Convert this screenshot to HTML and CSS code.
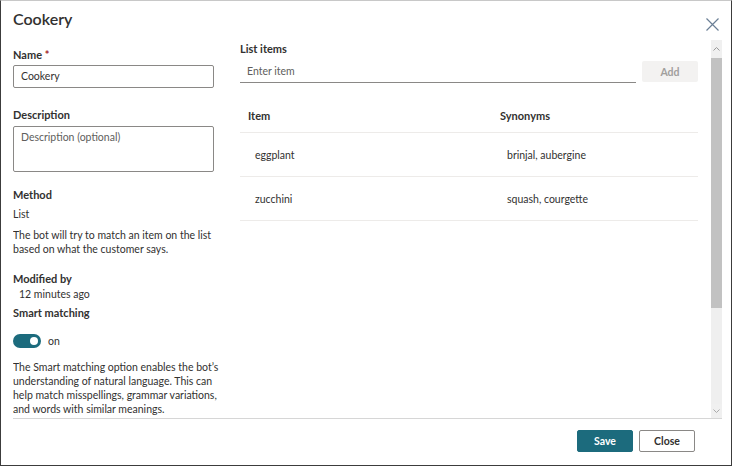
FILE: index.html
```html
<!DOCTYPE html>
<html>
<head>
<meta charset="utf-8">
<link rel="stylesheet" href="styles.css">
</head>
<body>
<div class="dialog">
  <div class="header">
    <h1 class="title">Cookery</h1>
    <button class="close-x" aria-label="Close">
      <svg width="13" height="13" viewBox="0 0 13 13"><path d="M0.5 0.5 L12.5 12.5 M12.5 0.5 L0.5 12.5" stroke="#6b7f96" stroke-width="1.2" fill="none"/></svg>
    </button>
  </div>
  <div class="scroll">
    <div class="content">
      <div class="left">
        <label class="label first">Name <span class="req">*</span></label>
        <div class="input">Cookery</div>
        <label class="label desc-label">Description</label>
        <div class="textarea">Description (optional)</div>
        <div class="label method">Method</div>
        <div class="text list">List</div>
        <p class="text para1">The bot will try to match an item on the list based on what the customer says.</p>
        <div class="label modified">Modified by</div>
        <div class="text ago">12 minutes ago</div>
        <div class="label smart">Smart matching</div>
        <div class="toggle-row">
          <span class="toggle"><span class="knob"></span></span>
          <span class="text">on</span>
        </div>
        <p class="text para2">The Smart matching option enables the bot’s understanding of natural language. This can help match misspellings, grammar variations, and words with similar meanings.</p>
      </div>
      <div class="right">
        <div class="label list-label">List items</div>
        <div class="add-row">
          <div class="item-input">Enter item</div>
          <button class="add">Add</button>
        </div>
        <div class="table">
          <div class="row head"><span class="c1">Item</span><span class="c2">Synonyms</span></div>
          <div class="row"><span class="c1">eggplant</span><span class="c2">brinjal, aubergine</span></div>
          <div class="row"><span class="c1">zucchini</span><span class="c2">squash, courgette</span></div>
        </div>
      </div>
    </div>
    <div class="scrollbar">
      <div class="arrow up"><svg width="7" height="4" viewBox="0 0 7 4"><path d="M0.5 3.5 L3.5 0.5 L6.5 3.5" stroke="#999" fill="none"/></svg></div>
      <div class="thumb"></div>
      <div class="track"></div>
      <div class="arrow down"><svg width="7" height="4" viewBox="0 0 7 4"><path d="M0.5 0.5 L3.5 3.5 L6.5 0.5" stroke="#aaa" fill="none"/></svg></div>
    </div>
  </div>
  <div class="footer">
    <button class="btn save">Save</button>
    <button class="btn close">Close</button>
  </div>
</div>
</body>
</html>
```

FILE: styles.css
```css
* { box-sizing: border-box; }
html, body { margin: 0; padding: 0; background: #fff; }
body {
  width: 732px; height: 466px; overflow: hidden;
  font-family: "Lato", "Open Sans", sans-serif;
  color: #323130;
}
.dialog {
  width: 732px; height: 466px;
  border: 1px solid #3c3c3c;
  border-top-color: #c8c8c8;
  display: flex; flex-direction: column;
  background: #fff;
}
.header {
  height: 39px;
  display: flex; align-items: flex-start; justify-content: space-between;
  padding: 0 12px 0 12px;
}
.title {
  margin: 8px 0 0 0;
  font-size: 16px; font-weight: 600; line-height: 20px;
  color: #323130;
}
.close-x {
  border: 0; background: none; padding: 0; margin-top: 17px;
  width: 13px; height: 13px; display: flex;
}
.scroll {
  margin-left: 12px;
  margin-right: 9px;
  height: 379px;
  display: flex;
  border-bottom: 1px solid #d6d6d6;
}
.content {
  flex: 1;
  display: flex;
  gap: 26px;
  padding-right: 13px;
  overflow: hidden;
}
.left { width: 201px; flex: none; }
.right { flex: 1; }
.label {
  display: block;
  font-size: 11px; font-weight: 700; line-height: 14px;
  color: #323130;
}
.req { color: #a4262c; }
.text { font-size: 10.5px; line-height: 14px; color: #323130; margin: 0; }
.first { margin-top: 8px; }
.input {
  margin-top: 3px;
  height: 23px;
  border: 1px solid #8a8886; border-radius: 2px;
  font-size: 10.5px; line-height: 21px; padding: 0 7px;
}
.desc-label { margin-top: 20px; }
.textarea {
  margin-top: 4px; height: 46px;
  border: 1px solid #8a8886; border-radius: 2px;
  font-size: 10.5px; line-height: 14px; padding: 3px 7px;
  color: #605e5c;
}
.method { margin-top: 16px; }
.list { margin-top: 5px; }
.para1 { margin-top: 7px; }
.modified { margin-top: 16px; }
.ago { margin-top: 1px; padding-left: 6px; }
.smart { margin-top: 5px; }
.toggle-row { margin-top: 14px; display: flex; align-items: center; gap: 7px; height: 14px; }
.toggle {
  width: 28px; height: 14px; border-radius: 7px;
  background: #1c6b7d; position: relative; display: inline-block;
}
.knob {
  position: absolute; right: 3px; top: 3px;
  width: 8px; height: 8px; border-radius: 50%; background: #fff;
}
.para2 { margin-top: 12px; width: 214px; }
.list-label { margin-top: 2px; }
.add-row { display: flex; gap: 6px; margin-top: 5px; align-items: flex-start; }
.item-input {
  flex: 1; height: 22px;
  border-bottom: 1px solid #8a8886;
  font-size: 10.5px; line-height: 20px; padding-left: 7px;
  color: #605e5c;
}
.add {
  width: 56px; height: 21px; border: 0; border-radius: 2px;
  background: #f3f2f1; color: #a19f9d;
  font-family: inherit; font-size: 10.5px; font-weight: 700; padding: 0;
}
.table { margin-top: 22px; }
.row {
  display: flex; height: 44px; align-items: center;
  border-bottom: 1px solid #edebe9;
  font-size: 10.5px;
}
.row.head { height: 28px; align-items: flex-start; padding-top: 4px; font-weight: 700; font-size: 11px; }
.row .c1 { width: 260px; padding-left: 15px; }
.row .c2 { padding-left: 7px; }
.row.head .c1 { padding-left: 8px; }
.row.head .c2 { padding-left: 0; }
.scrollbar {
  width: 11px; flex: none;
  display: flex; flex-direction: column;
  background: #f0f0f0;
}
.arrow { height: 18px; display: flex; align-items: center; justify-content: center; }
.arrow.down { height: 14px; }
.thumb { height: 250px; background: #c2c2c2; }
.track { flex: 1; background: #efefef; }
.footer {
  flex: 1;
  display: flex; justify-content: flex-end; align-items: flex-start;
  gap: 6px; padding: 11px 36px 0 0;
}
.btn {
  width: 56px; height: 22px; border-radius: 2px;
  font-family: inherit; font-size: 10.5px; font-weight: 700; padding: 0;
}
.save { background: #1c6b7d; border: 1px solid #1c6b7d; color: #fff; }
.close { background: #fff; border: 1px solid #8a8886; color: #323130; }
```
